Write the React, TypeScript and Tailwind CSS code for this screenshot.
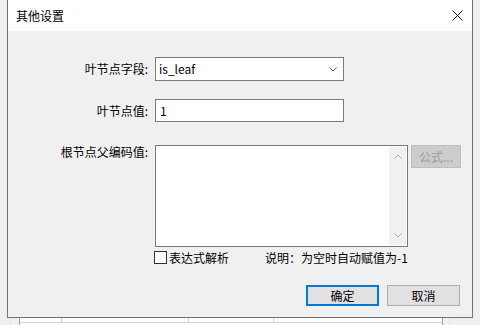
import React from "react";

const font = { fontFamily: '"Noto Sans CJK SC", "Noto Sans", sans-serif' };

function Chevron({ up = false, color = "#606060" }: { up?: boolean; color?: string }) {
  return (
    <svg width="8" height="5" viewBox="0 0 8 5" className="block">
      <path
        d={up ? "M0.5 4.5 L4 1 L7.5 4.5" : "M0.5 0.5 L4 4 L7.5 0.5"}
        fill="none"
        stroke={color}
        strokeWidth="1"
      />
    </svg>
  );
}

export default function App() {
  return (
    <div
      className="w-[480px] h-[325px] bg-[#f0f0f0] overflow-hidden text-[12px] text-black flex flex-col"
      style={font}
    >
      {/* Dialog window */}
      <div className="ml-[7px] w-[466px] h-[318px] border-x border-b border-[#737373] flex flex-col shrink-0">
        {/* Title bar */}
        <div className="h-[31px] bg-white flex items-center justify-between pl-[8px] pr-[9px] shrink-0">
          <span className="leading-none">其他设置</span>
          <svg width="11" height="11" viewBox="0 0 11 11">
            <path d="M0.5 0.5 L10.5 10.5 M10.5 0.5 L0.5 10.5" stroke="#111" strokeWidth="1" />
          </svg>
        </div>

        {/* Body */}
        <div className="flex-1 bg-[#f0f0f0] flex flex-col">
          {/* Leaf field */}
          <div className="flex items-center gap-[7px] mt-[26px] h-[24px]">
            <div className="w-[140px] text-right leading-none">叶节点字段:</div>
            <div className="w-[189px] h-[24px] bg-white border border-[#7a7a7a] flex items-center justify-between pl-[3px] pr-[6px]">
              <span className="leading-none">is_leaf</span>
              <Chevron />
            </div>
          </div>

          {/* Leaf value */}
          <div className="flex items-center gap-[7px] mt-[18px] h-[23px]">
            <div className="w-[140px] text-right leading-none">叶节点值:</div>
            <div className="w-[189px] h-[23px] bg-white border border-[#7a7a7a] flex items-center pl-[4px]">
              <span className="leading-none">1</span>
            </div>
          </div>

          {/* Root parent code */}
          <div className="flex items-start gap-[7px] mt-[23px]">
            <div className="w-[140px] text-right leading-[14px]">根节点父编码值:</div>
            <div className="w-[253px] h-[102px] bg-white border border-[#7a7a7a] flex justify-end p-px">
              <div className="w-[17px] bg-[#f0f0f0] flex flex-col items-center justify-between py-[7px]">
                <Chevron up color="#a6a6a6" />
                <Chevron color="#a6a6a6" />
              </div>
            </div>
            <div className="ml-[-4px] w-[50px] h-[23px] bg-[#cccccc] border border-[#bfbfbf] text-[#9a9a9a] flex items-center justify-center leading-none">
              公式...
            </div>
          </div>

          {/* Checkbox + note */}
          <div className="flex items-center mt-[4px] ml-[146px] h-[13px]">
            <div className="w-[13px] h-[13px] bg-white border border-[#333]" />
            <span className="ml-[2px] leading-none">表达式解析</span>
            <span className="ml-[36px] leading-none">说明：为空时自动赋值为-1</span>
          </div>

          {/* Buttons */}
          <div className="flex justify-end gap-[8px] pr-[12px] mt-[21px]">
            <div className="w-[73px] h-[21px] bg-[#e1e1e1] border-2 border-[#0078d7] flex items-center justify-center leading-none">
              确定
            </div>
            <div className="w-[73px] h-[21px] bg-[#e1e1e1] border border-[#adadad] flex items-center justify-center leading-none">
              取消
            </div>
          </div>
        </div>
      </div>

      {/* Content behind the dialog */}
      <div className="flex h-[7px] shrink-0">
        <div className="ml-[10px] w-[9px] border-l border-[#e3e3e3]" />
        <div className="w-[424px] bg-white border-x border-[#a0a0a0] flex">
          <div className="w-[42px] h-[5px] border-r border-b border-[#d0d0d0]" />
          <div className="w-[127px] h-[5px] border-r border-b border-[#d0d0d0]" />
          <div className="w-[85px] h-[5px] border-r border-b border-[#d0d0d0]" />
          <div className="flex-1 h-[5px] border-b border-[#d0d0d0]" />
        </div>
        <div className="ml-[6px] border-l border-[#e3e3e3]" />
      </div>
    </div>
  );
}
